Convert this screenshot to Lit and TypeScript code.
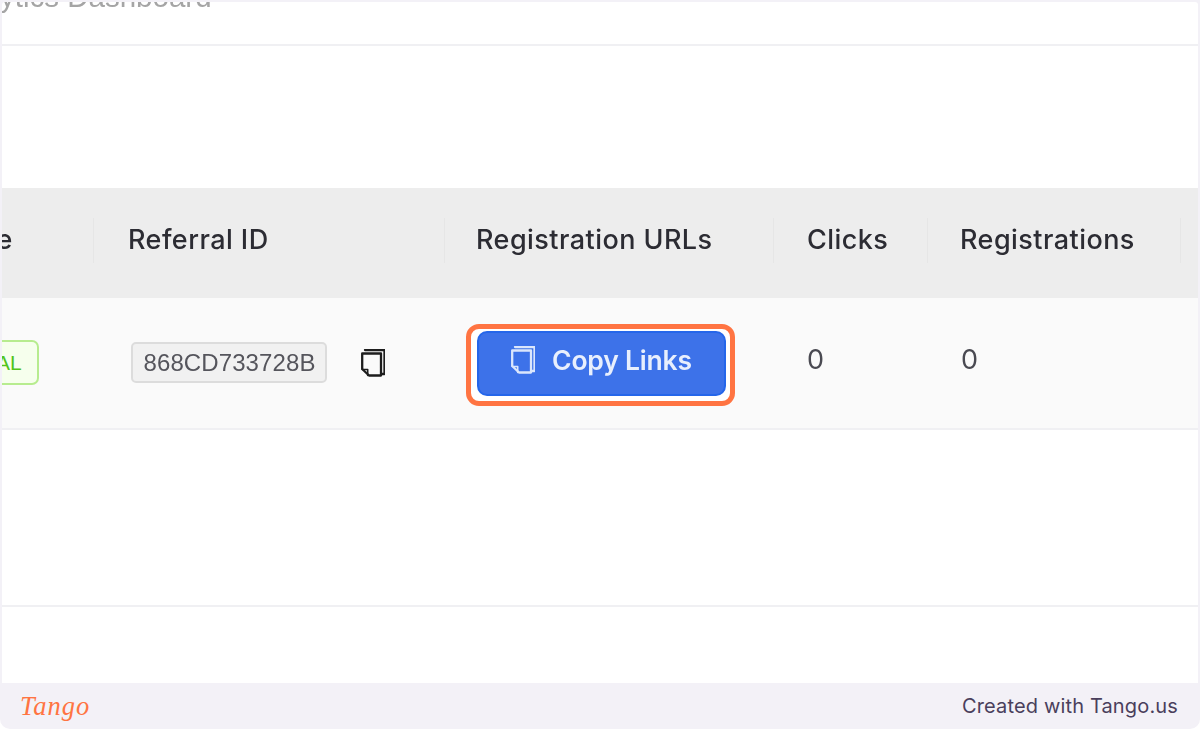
import { LitElement, html, css } from "lit";
import { customElement } from "lit/decorators.js";

const copyIcon = html`<svg class="ic" viewBox="0 0 24 28" fill="none" stroke="currentColor" stroke-width="2.300" stroke-linejoin="round" stroke-linecap="round" aria-hidden="true">
  <path d="M4 1h19.500v24h-3"/>
  <path d="M1.200 4.500h18.800v22H8l-6.800-6.500z"/>
  <path d="M1.200 20.500h5.500v6" stroke-width="1.600"/>
</svg>`;

@customElement("app-root")
export class AppRoot extends LitElement {
  static styles = css`
    :host { display: block; width: 1200px; height: 729px; background: #fff; font-family: Inter, "Open Sans", sans-serif; }
    .frame { height: 729px; box-sizing: border-box; padding: 2px 2px 0; background: #f3f1f7; border-radius: 0 0 10px 10px; display: flex; flex-direction: column; overflow: hidden; }
    .sheet { flex: 0 0 681px; background: #fff; border-radius: 3px 3px 0 0; overflow: hidden; display: flex; flex-direction: column; }
    .title { flex: 0 0 42px; border-bottom: 2px solid #f0f0f3; overflow: hidden; }
    .title span { display: block; margin: -20px 0 0 -61px; font: 400 29.500px/30px "Liberation Sans", sans-serif; color: #a5a5a5; white-space: nowrap; filter: blur(.7px); }
    .gap { flex: 0 0 142px; }
    .table { display: grid; grid-template-columns: 92px 351px 329px 154px 253px 17px; }
    .h { height: 110px; background: #ededed; display: flex; align-items: center; box-sizing: border-box; font-size: 27px; font-weight: 500; letter-spacing: .45px; color: #2c2c33; position: relative; overflow: hidden; padding: 0 0 7px 33px; white-space: nowrap; }
    .h > span { filter: blur(.4px); }
    .h.div::after { content: ""; position: absolute; right: 0; top: 30px; bottom: 35px; width: 1px; background: #e6e6e6; }
    .h.first { padding-left: 0; }
    .h.first span { margin-left: -55px; }
    .h.p34 { padding-left: 34px; }
    .h.p31 { padding-left: 31px; }
    .h.p32 { padding-left: 32px; }
    .c { height: 132px; box-sizing: border-box; background: #fafafa; border-bottom: 2px solid #f0f0f3; display: flex; align-items: center; padding-left: 33px; color: #4a4a52; font-size: 27px; }
    .c.first { padding-left: 0; }
    .num { padding-bottom: 7px; filter: blur(.4px); }
    .badge { width: 37px; height: 45px; margin-bottom: 1px; box-sizing: border-box; border: 2px solid #b7ec8f; border-left: 0; border-radius: 0 7px 7px 0; background: #f6ffed; color: #52c41a; font: 400 21px/41px "Liberation Sans", sans-serif; overflow: hidden; text-indent: -6px; }
    .c.id { gap: 34px; padding-left: 37px; }
    .code { width: 196px; height: 41px; margin-bottom: 1px; box-sizing: border-box; border: 2px solid #dcdcdc; border-radius: 5px; background: #f1f1f1; color: #55555c; font: 400 24px/37px "Liberation Sans", sans-serif; text-align: center; letter-spacing: .1px; text-indent: 1px; filter: blur(.3px); }
    .ic { width: 24px; height: 28px; color: #1d1d1d; flex: none; }
    .c.btn { padding-left: 21px; }
    .hl { width: 269px; height: 82px; box-sizing: border-box; border: 5px solid #ff7442; border-radius: 13px; padding: 2px 4px 5px 6px; background: #fff; margin-top: 4px; }
    .b { width: 100%; height: 100%; box-sizing: border-box; background: #3d72e9; border: 2px solid #2566ea; border-radius: 10px; color: #e8effd; display: flex; align-items: center; justify-content: center; gap: 17px; font-size: 26.500px; font-weight: 600; letter-spacing: -.2px; padding-bottom: 7px; }
    .b .ic { color: #dbe6fc; }
    .b > * { filter: blur(.4px); }
    .blank { flex: 0 0 175px; border-bottom: 2px solid #f0f0f3; }
    .rest { flex: 1; }
    .foot { flex: 1; display: flex; align-items: center; justify-content: space-between; padding: 0 20px 0 18px; }
    .logo { font: italic 400 26.500px/1 "Liberation Serif", serif; color: #ff7442; letter-spacing: 1px; }
    .made { font-size: 20px; color: #4a3f5c; letter-spacing: .15px; }
  `;

  render() {
    return html`<div class="frame">
      <div class="sheet">
        <div class="title"><span>Analytics Dashboard</span></div>
        <div class="gap"></div>
        <div class="table">
          <div class="h first div"><span>Type</span></div>
          <div class="h div p34"><span>Referral ID</span></div>
          <div class="h div p31"><span>Registration URLs</span></div>
          <div class="h div"><span>Clicks</span></div>
          <div class="h div p32"><span>Registrations</span></div>
          <div class="h"></div>
          <div class="c first"><div class="badge">AL</div></div>
          <div class="c id"><div class="code">868CD733728B</div>${copyIcon}</div>
          <div class="c btn"><div class="hl"><div class="b">${copyIcon}<span>Copy Links</span></div></div></div>
          <div class="c"><span class="num">0</span></div>
          <div class="c"><span class="num">0</span></div>
          <div class="c"></div>
        </div>
        <div class="blank"></div>
        <div class="rest"></div>
      </div>
      <div class="foot"><span class="logo">Tango</span><span class="made">Created with Tango.us</span></div>
    </div>`;
  }
}
